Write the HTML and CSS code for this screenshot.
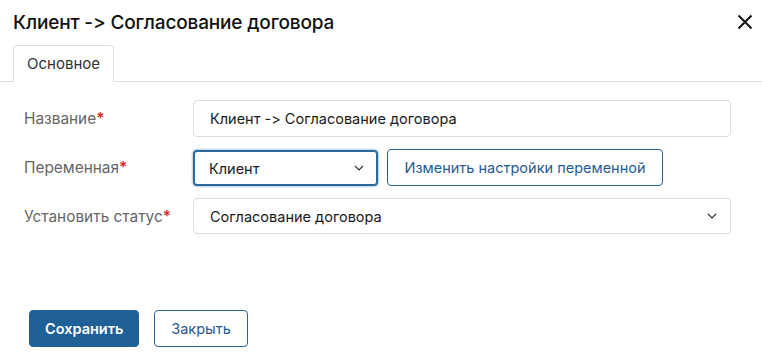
FILE: index.html
```html
<!DOCTYPE html>
<html lang="ru">
<head>
<meta charset="utf-8">
<link rel="stylesheet" href="styles.css">
</head>
<body>
<div class="dialog">
  <header class="head">
    <h1 class="title">Клиент -&gt; Согласование договора</h1>
    <button class="close" aria-label="Закрыть">
      <svg width="16" height="16" viewBox="0 0 16 16"><path d="M1.5 1.5L14.5 14.5M14.5 1.5L1.5 14.5" stroke="#111" stroke-width="2" fill="none"/></svg>
    </button>
  </header>
  <nav class="tabs">
    <div class="tab">Основное</div>
  </nav>
  <form class="form">
    <div class="row">
      <label class="label">Название<span class="req">*</span></label>
      <div class="field wide"><div class="input">Клиент -&gt; Согласование договора</div></div>
    </div>
    <div class="row">
      <label class="label">Переменная<span class="req">*</span></label>
      <div class="field">
        <div class="input select focus">Клиент<svg class="chev" width="10" height="6" viewBox="0 0 10 6"><path d="M1 1l4 4 4-4" stroke="#333" stroke-width="1.2" fill="none"/></svg></div>
        <button type="button" class="btn outline">Изменить настройки переменной</button>
      </div>
    </div>
    <div class="row">
      <label class="label">Установить статус<span class="req">*</span></label>
      <div class="field wide"><div class="input select plain">Согласование договора<svg class="chev" width="10" height="6" viewBox="0 0 10 6"><path d="M1 1l4 4 4-4" stroke="#333" stroke-width="1.2" fill="none"/></svg></div></div>
    </div>
  </form>
  <footer class="foot">
    <button class="btn primary">Сохранить</button>
    <button class="btn outline">Закрыть</button>
  </footer>
</div>
</body>
</html>
```
FILE: styles.css
```css
* { box-sizing: border-box; }
html, body { margin: 0; padding: 0; background: #fff; }
body { font-family: Inter, "Noto Sans", sans-serif; font-variant-ligatures: none; font-feature-settings: "calt" 0; color: #1a1a1a; width: 762px; height: 361px; overflow: hidden; }
.dialog { display: flex; flex-direction: column; height: 361px; }
.head { display: flex; align-items: center; justify-content: space-between; padding: 6px 9px 0 13px; height: 38px; }
.title { margin: 0; font-size: 19px; font-weight: 500; letter-spacing: -0.15px; color: #111; }
.close { border: 0; background: none; padding: 0; width: 16px; height: 16px; display: flex; cursor: pointer; }
.tabs { display: flex; padding: 7px 0 0 13px; border-bottom: 1px solid #dcdde3; }
.tab { height: 37px; margin-bottom: -1px; padding: 0 13px; display: flex; align-items: center; font-size: 15px; color: #333; border: 1px solid #dcdde3; border-bottom-color: #fff; border-radius: 4px 4px 0 0; background: #fff; width: 101px; }
.form { display: flex; flex-direction: column; gap: 12px; padding: 18px 31px 0 24px; }
.row { display: flex; align-items: center; }
.label { width: 169px; font-size: 15.4px; color: #666; }
.req { color: #e02424; font-weight: 600; }
.field { display: flex; gap: 9px; flex: 1; }
.input { height: 37px; flex: 1; border: 1px solid #dcdcdc; border-radius: 4px; display: flex; align-items: center; padding: 0 16px; font-size: 14.5px; color: #1a1a1a; }
.select { justify-content: space-between; }
.focus { flex: 0 0 185px; border: 2px solid #2b6a9f; box-shadow: 0 0 2px 1px rgba(43,106,159,0.35); padding: 0 12px 0 14px; height: 36px; margin-top: 1px; }
.plain { padding: 0 13px 0 16px; height: 36px; }
.chev { flex: none; }
.btn { font-family: Inter, "Noto Sans", sans-serif; font-size: 14.5px; height: 37px; border-radius: 4px; padding: 0 15px; cursor: pointer; }
.btn.outline { background: #fff; border: 1px solid #2a6497; color: #1f5c91; }
.btn.primary { background: #1f6196; border: 1px solid #1f6196; color: #fff; font-weight: 600; width: 110px; }
.field .btn.outline { width: 276px; }
.foot { display: flex; gap: 15px; padding: 0 0 0 29px; margin-top: 76px; }
.foot .btn.outline { width: 94px; }
```
